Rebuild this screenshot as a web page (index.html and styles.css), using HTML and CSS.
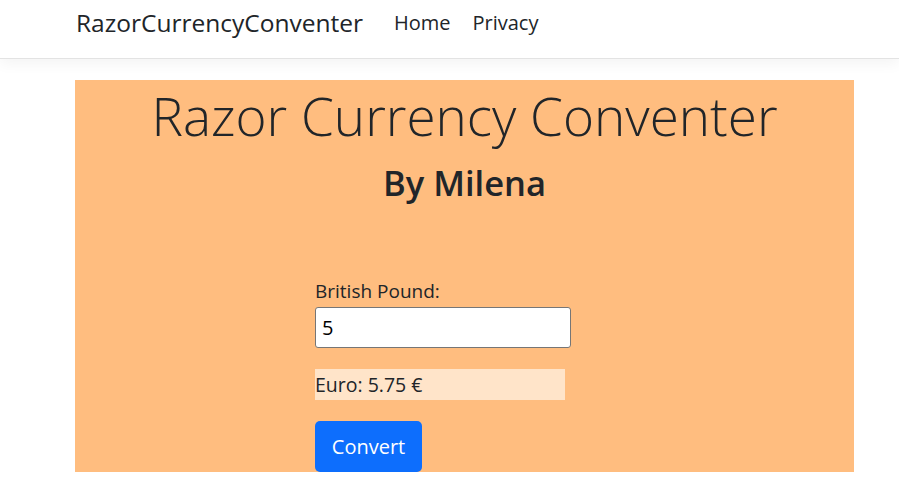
FILE: index.html
```html
<!DOCTYPE html>
<html lang="en">
<head>
<meta charset="utf-8">
<title>RazorCurrencyConventer</title>
<link rel="stylesheet" href="styles.css">
</head>
<body>
<header class="topbar">
  <nav class="nav">
    <a class="brand" href="#">RazorCurrencyConventer</a>
    <ul class="links">
      <li><a href="#">Home</a></li>
      <li><a href="#">Privacy</a></li>
    </ul>
  </nav>
</header>
<main class="main">
  <section class="panel">
    <h1 class="title">Razor Currency Conventer</h1>
    <h2 class="byline">By Milena</h2>
    <form class="form">
      <label class="label" for="gbp">British Pound:</label>
      <input class="input" id="gbp" type="text" value="5">
      <div class="result">Euro: 5.75 €</div>
      <button class="btn" type="button">Convert</button>
    </form>
  </section>
</main>
</body>
</html>
```
FILE: styles.css
```css
* { box-sizing: border-box; }
html, body { margin: 0; padding: 0; }
body {
  font-family: "Open Sans", "Noto Sans", sans-serif;
  color: #212529;
  background: #fff;
}
.topbar {
  height: 59px;
  border-bottom: 1px solid #e3e3e3;
  box-shadow: 0 4px 14px rgba(0,0,0,0.05);
}
.nav {
  display: flex;
  align-items: center;
  height: 58px;
  padding-left: 76px;
  padding-bottom: 14px;
}
.brand {
  font-size: 24.5px;
  color: #212529;
  text-decoration: none;
  margin-right: 31px;
}
.links {
  display: flex;
  gap: 22px;
  list-style: none;
  margin: 0;
  padding: 0;
}
.links a {
  font-size: 20px;
  color: #212529;
  text-decoration: none;
}
.main {
  padding: 21px 0 0 75px;
}
.panel {
  width: 779px;
  height: 392px;
  background: #ffbd7f;
  overflow: hidden;
}
.title {
  margin: 0;
  padding-top: 4px;
  text-align: center;
  font-weight: 300;
  font-size: 53px;
  line-height: 1.2;
}
.byline {
  margin: 14px 0 0;
  text-align: center;
  font-weight: 600;
  font-size: 34.5px;
  line-height: 1.2;
}
.form {
  display: flex;
  flex-direction: column;
  align-items: flex-start;
  padding: 76px 0 0 240px;
}
.label {
  font-size: 19px;
  line-height: 1.3;
}
.input {
  margin-top: 3px;
  width: 256px;
  height: 41px;
  border: 1px solid #767676;
  border-radius: 3px;
  padding: 0 6px;
  font-family: inherit;
  font-size: 20px;
  color: #000;
  background: #fff;
}
.result {
  margin-top: 21px;
  width: 250px;
  height: 31px;
  background: #ffe4c9;
  font-size: 19.5px;
  line-height: 31px;
}
.btn {
  margin-top: 21px;
  width: 107px;
  height: 51px;
  border: none;
  border-radius: 5px;
  background: #0d6efd;
  color: #fff;
  font-family: inherit;
  font-size: 20px;
  padding: 0;
}
```
